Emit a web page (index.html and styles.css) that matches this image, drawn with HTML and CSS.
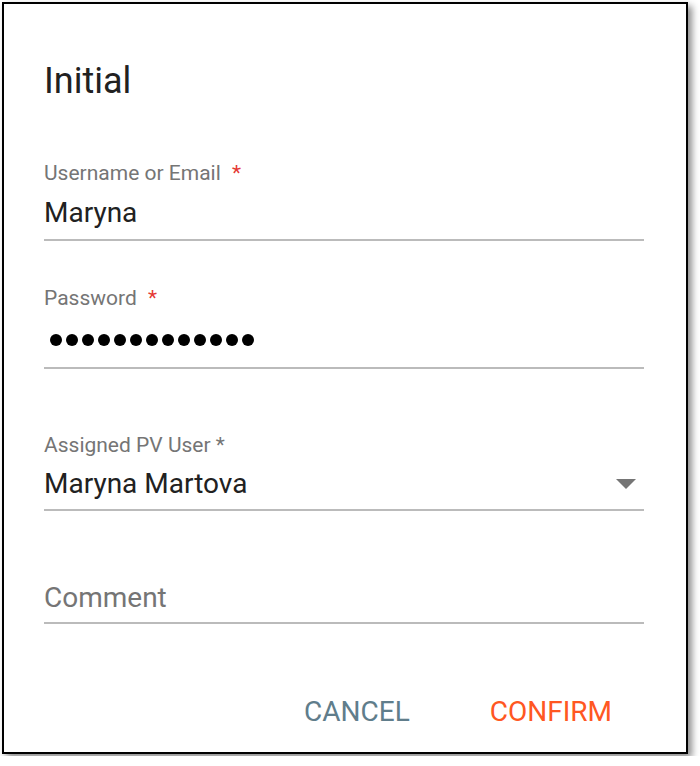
FILE: index.html
```html
<!DOCTYPE html>
<html lang="en">
<head>
  <meta charset="UTF-8" />
  <meta name="viewport" content="width=device-width, initial-scale=1.0"/>
  <title>Initial</title>
  <link rel="stylesheet" href="styles.css">
</head>
<body>

  <div class="dialog">
    <h2 class="dialog-title">Initial</h2>

    <div class="field field-user">
      <label class="field-label">Username or Email <span class="req">*</span></label>
      <div class="field-value">Maryna</div>
    </div>

    <div class="field field-pass">
      <label class="field-label">Password <span class="req">*</span></label>
      <div class="dots">
        <span></span><span></span><span></span><span></span><span></span>
        <span></span><span></span><span></span><span></span><span></span>
        <span></span><span></span><span></span>
      </div>
    </div>

    <div class="field field-select">
      <label class="field-label">Assigned PV User *</label>
      <div class="field-value select-row">
        <span>Maryna Martova</span>
        <svg class="arrow" width="20" height="10" viewBox="0 0 20 10">
          <polygon points="0,0 20,0 10,10" fill="#757575"/>
        </svg>
      </div>
    </div>

    <div class="field field-comment">
      <div class="field-value placeholder">Comment</div>
    </div>

    <div class="actions">
      <button class="btn btn-cancel">CANCEL</button>
      <button class="btn btn-confirm">CONFIRM</button>
    </div>
  </div>

</body>
</html>
```

FILE: styles.css
```css
* {
  margin: 0; padding: 0; box-sizing: border-box;
  font-family: Roboto, 'Liberation Sans', sans-serif;
}
body {
  background: #fff;
  color: #212121;
}
.dialog {
  margin: 2px;
  width: 686px;
  height: 752px;
  border: 2px solid #000;
  background: #fff;
  padding: 57px 42px 0 40px;
  box-shadow: 4px 4px 7px rgba(0, 0, 0, 0.45);
}
.dialog-title {
  font-size: 36px;
  font-weight: 400;
  line-height: 40px;
  color: #212121;
}
.field {
  width: 600px;
  border-bottom: 2px solid #bbbbbb;
  padding-bottom: 10px;
}
.field-user { margin-top: 60px; }
.field-pass { margin-top: 45px; padding-bottom: 12px; }
.field-select { margin-top: 64px; padding-bottom: 9px; }
.field-comment { margin-top: 71px; padding-bottom: 8px; }
.field-label {
  display: block;
  font-size: 21px;
  line-height: 24px;
  color: #757575;
}
.req {
  color: #e53935;
  margin-left: 6px;
}
.field-value {
  margin-top: 12px;
  font-size: 28px;
  line-height: 32px;
  color: #212121;
}
.field-select .field-value { margin-top: 11px; }
.field-comment .field-value { margin-top: 0; }
.placeholder {
  color: #757575;
}
.dots {
  margin-top: 9px;
  height: 36px;
  padding: 5px 0 0 6px;
  display: flex;
  align-items: center;
  gap: 4px;
}
.dots span {
  width: 12px;
  height: 12px;
  border-radius: 50%;
  background: #000;
}
.select-row {
  display: flex;
  justify-content: space-between;
  align-items: center;
}
.arrow {
  margin-right: 8px;
}
.actions {
  margin-top: 66px;
  width: 600px;
  display: flex;
  justify-content: flex-end;
  gap: 48px;
  padding-right: 16px;
}
.btn {
  background: none;
  border: none;
  padding: 6px 16px;
  font-size: 28px;
  line-height: 32px;
  font-weight: 400;
  cursor: pointer;
}
.btn-cancel { color: #607d8b; }
.btn-confirm { color: #ff5722; }
```
